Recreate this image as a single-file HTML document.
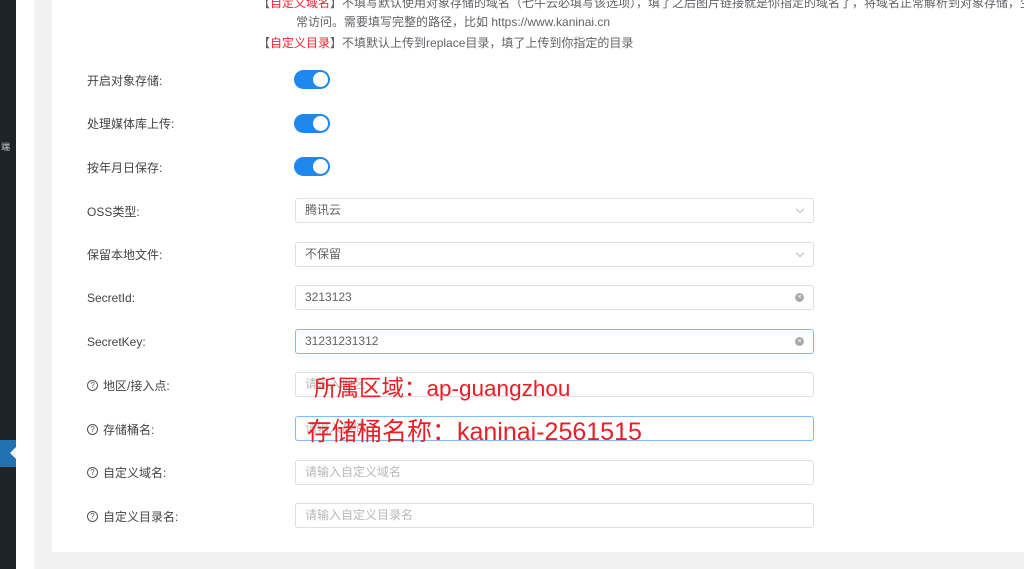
<!DOCTYPE html>
<html><head><meta charset="utf-8"><style>
*{box-sizing:border-box;margin:0;padding:0}
body{width:1024px;height:569px;overflow:hidden;background:#f1f1f1;font-family:"Liberation Sans","Noto Sans CJK SC",sans-serif;font-size:12px;color:#606266;position:relative}
.side{position:absolute;left:0;top:0;width:16px;height:569px;background:#1d2327}
.white1{position:absolute;left:16px;top:0;width:18px;height:569px;background:#fff}
.card{position:absolute;left:52px;top:0;width:972px;height:552px;background:#fff}
.act{position:absolute;left:0;top:440px;width:16px;height:27px;background:#2271b1}
.act:after{content:"";position:absolute;right:0;top:7px;border:6px solid transparent;border-right-color:#f1f1f1;border-left:0}
.t{position:absolute;white-space:nowrap;font-size:12px}
.red{color:#f5222d}
.lab{position:absolute;left:87px;color:#444;font-size:12px;white-space:nowrap;display:flex;align-items:center;height:16px}
.q{display:inline-block;width:11px;height:11px;border:1px solid #555;border-radius:50%;font-size:8px;line-height:9px;text-align:center;margin-right:5px;color:#555}
.sw{position:absolute;left:294px;width:36px;height:19px;border-radius:10px;background:#1e88ee}
.sw:after{content:"";position:absolute;right:2px;top:2px;width:15px;height:15px;border-radius:50%;background:#fff}
.in{position:absolute;left:295px;width:519px;height:25px;border:1px solid #dcdfe6;border-radius:3px;padding-left:9px;line-height:23px;color:#606266;font-size:12px}
.f{border:1px solid #7dbcff !important}
.ph{color:#b8b8b8}
.arr{position:absolute;right:10px;top:7px;width:6px;height:6px;border-right:1px solid #bbb;border-bottom:1px solid #bbb;transform:rotate(45deg)}
.clr{position:absolute;right:9px;top:7px;width:9px;height:9px;border-radius:50%;background:#aaa;color:#fff;font-size:7px;line-height:9px;text-align:center}
.ann{position:absolute;color:#ee1c25;font-family:"Liberation Sans","Noto Sans CJK SC",sans-serif;white-space:nowrap}
</style></head><body>
<div class="side"></div><div class="act"></div><div class="white1"></div>
<div class="t" style="left:1px;top:140px;color:#ccc;font-size:9px">端</div>
<div class="card"></div>
<div class="t" style="left:258px;top:-6px">【<span class="red">自定义域名</span>】不填写默认使用对象存储的域名（七牛云必填写该选项），填了之后图片链接就是你指定的域名了，将域名正常解析到对象存储，生效</div>
<div class="t" style="left:296px;top:13px">常访问。需要填写完整的路径，比如 https://www.kaninai.cn</div>
<div class="t" style="left:258px;top:34px">【<span class="red">自定义目录</span>】不填默认上传到replace目录，填了上传到你指定的目录</div>

<div class="lab" style="top:72px">开启对象存储:</div><div class="sw" style="top:70px"></div>
<div class="lab" style="top:115px">处理媒体库上传:</div><div class="sw" style="top:114px"></div>
<div class="lab" style="top:159px">按年月日保存:</div><div class="sw" style="top:157px"></div>

<div class="lab" style="top:203px">OSS类型:</div><div class="in" style="top:198px">腾讯云<span class="arr"></span></div>
<div class="lab" style="top:246px">保留本地文件:</div><div class="in" style="top:242px">不保留<span class="arr"></span></div>
<div class="lab" style="top:290px">SecretId:</div><div class="in" style="top:285px">3213123<span class="clr">×</span></div>
<div class="lab" style="top:334px">SecretKey:</div><div class="in f" style="top:329px">31231231312<span class="clr">×</span></div>
<div class="lab" style="top:377px"><span class="q">?</span>地区/接入点:</div><div class="in" style="top:372px"><span class="ph">请输入地区</span></div>
<div class="lab" style="top:421px"><span class="q">?</span>存储桶名:</div><div class="in f" style="top:416px"><span class="ph">请输入存储</span></div>
<div class="lab" style="top:464px"><span class="q">?</span>自定义域名:</div><div class="in" style="top:460px"><span class="ph">请输入自定义域名</span></div>
<div class="lab" style="top:508px"><span class="q">?</span>自定义目录名:</div><div class="in" style="top:503px"><span class="ph">请输入自定义目录名</span></div>

<div class="ann" style="left:314px;top:371px;font-size:22.5px">所属区域：ap-guangzhou</div>
<div class="ann" style="left:307px;top:412px;font-size:25px">存储桶名称：kaninai-2561515</div>
</body></html>
